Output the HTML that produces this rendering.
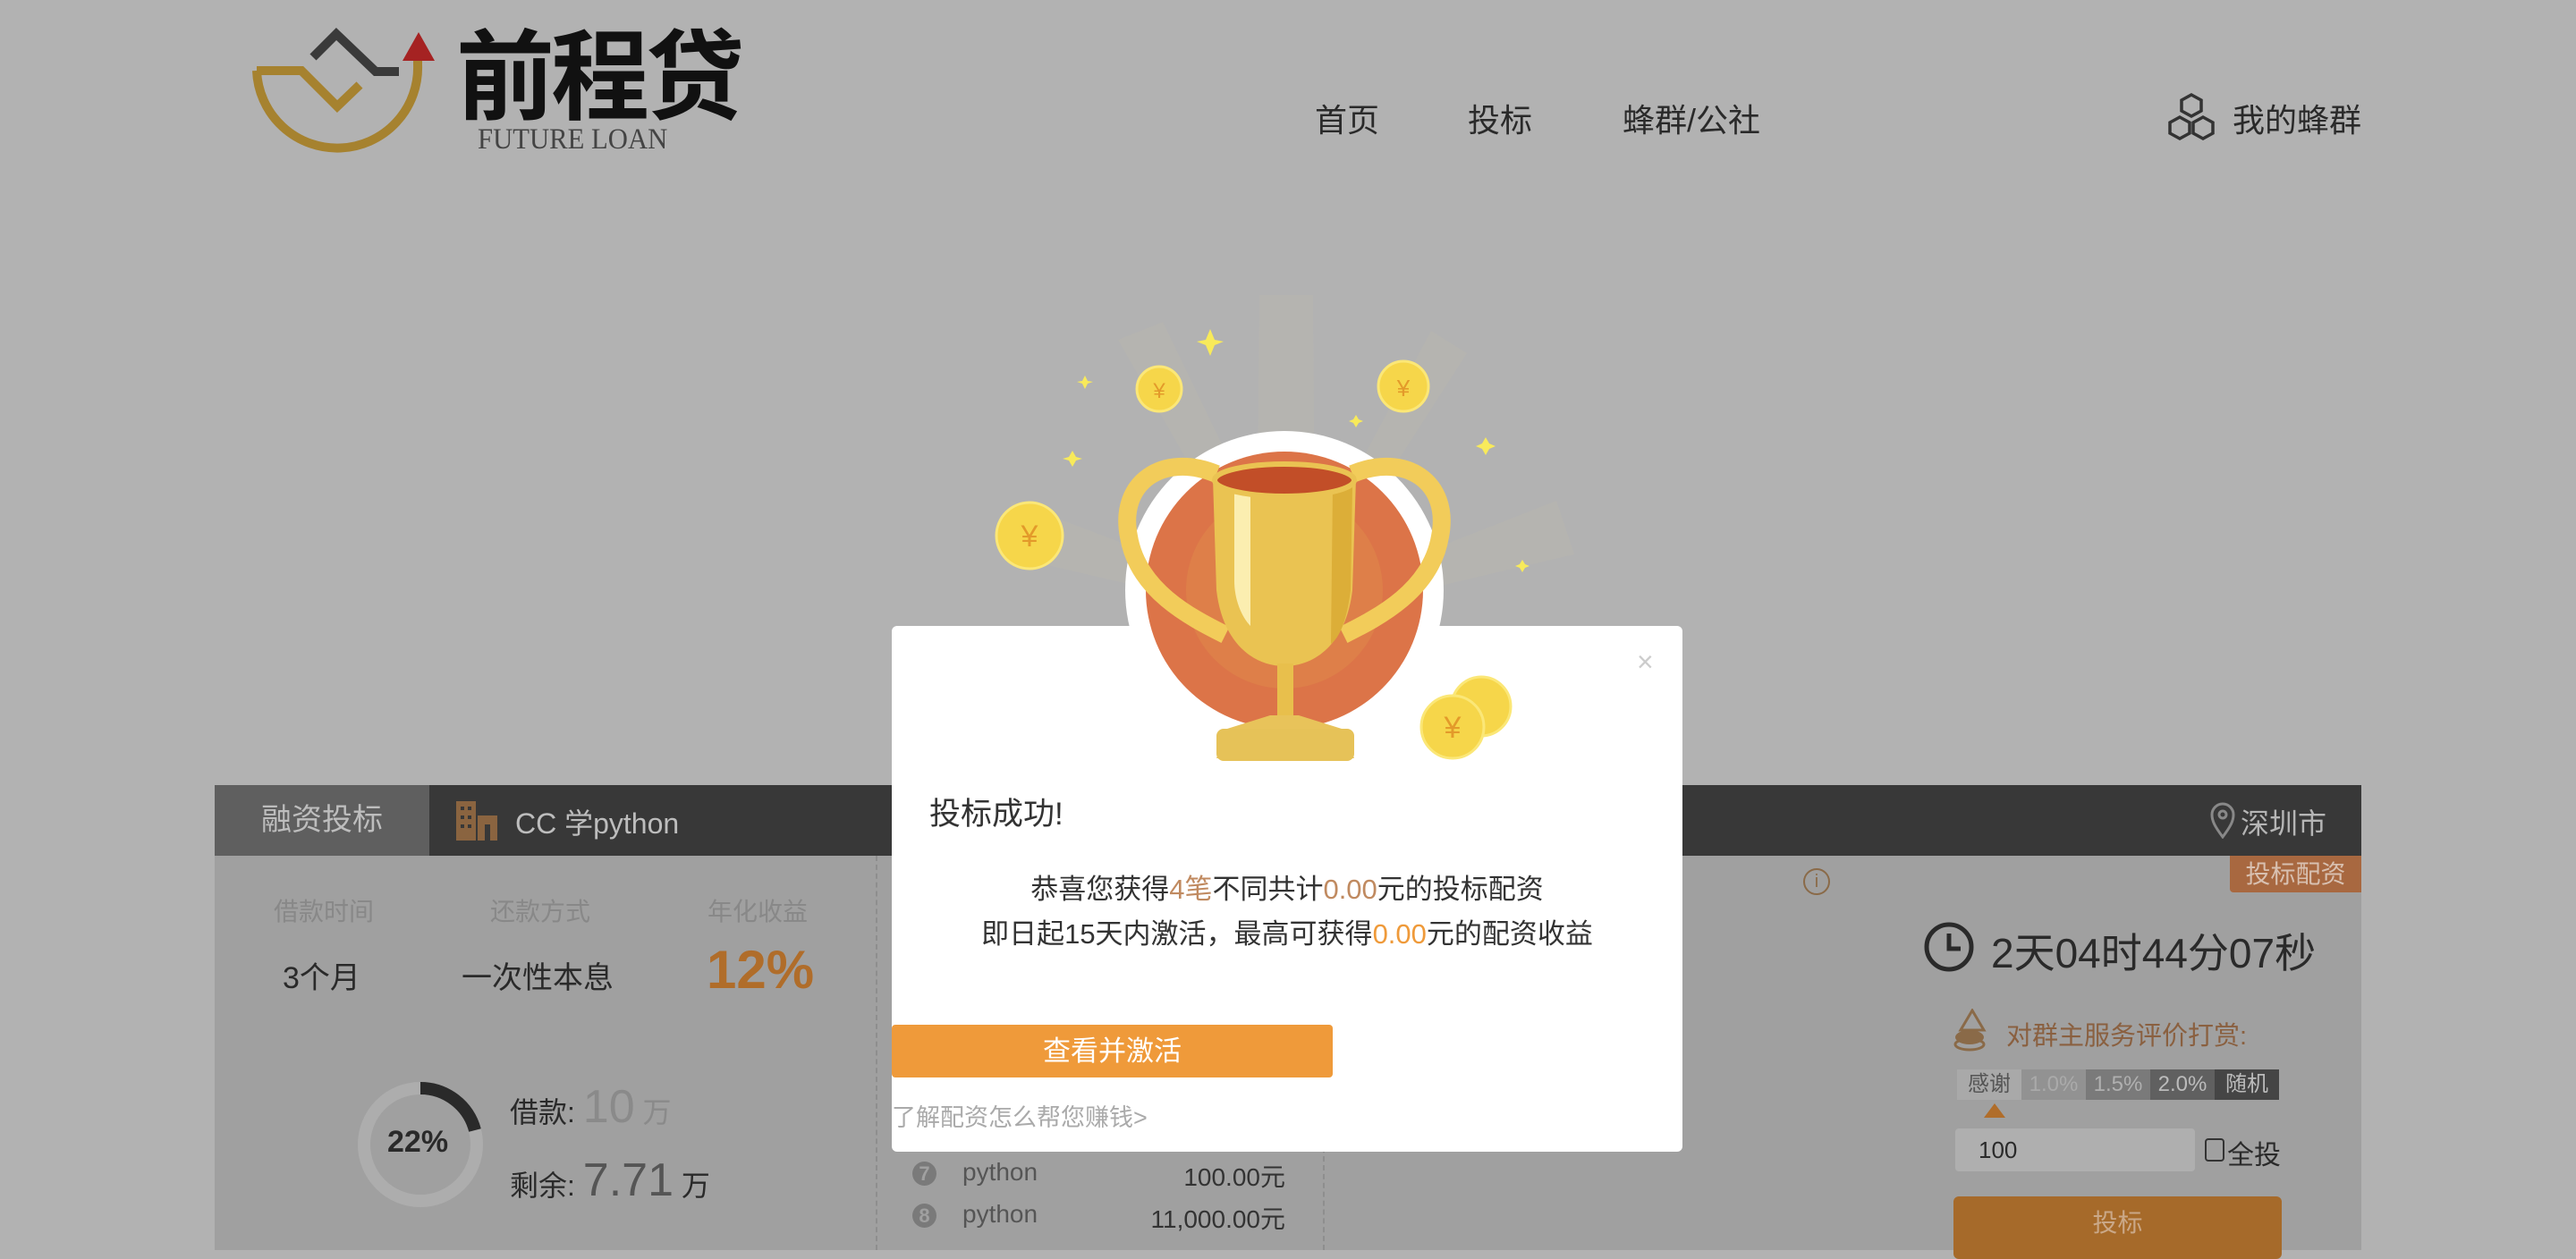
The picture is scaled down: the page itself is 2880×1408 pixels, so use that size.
<!DOCTYPE html>
<html><head><meta charset="utf-8">
<style>
*{margin:0;padding:0;box-sizing:border-box}
body{width:2880px;height:1398px;overflow:hidden;background:#b2b2b2;font-family:"Liberation Sans","Noto Sans CJK SC",sans-serif;position:relative;color:#2a2a2a}
.a{position:absolute;white-space:nowrap}
</style></head><body>
<!-- logo -->
<svg class="a" style="left:260px;top:22px" width="240" height="170" viewBox="260 10 240 170">
<path d="M287 67 L337 67 L377 107 L402 83" fill="none" stroke="#a6822f" stroke-width="10"/>
<path d="M287 67 A90 90 0 0 0 467 60 L467 50" fill="none" stroke="#a6822f" stroke-width="10"/>
<path d="M350 52 L376 26 L420 68 L446 68" fill="none" stroke="#3a3a3a" stroke-width="10"/>
<path d="M450 56 L468 24 L486 56 Z" fill="#a52222"/>
</svg>
<div class="a" style="left:510px;top:28px;font-size:110px;line-height:120px;color:#111;letter-spacing:-4px;font-weight:bold">前程贷</div>
<div class="a" style="left:534px;top:138px;font-size:33px;font-family:'Liberation Serif',serif;color:#444;transform:scaleX(.93);transform-origin:left">FUTURE LOAN</div>
<!-- nav -->
<div class="a" style="left:1470px;top:106px;font-size:36px;color:#2a2a2a">首页</div>
<div class="a" style="left:1641px;top:106px;font-size:36px;color:#2a2a2a">投标</div>
<div class="a" style="left:1814px;top:106px;font-size:36px;color:#2a2a2a">蜂群/公社</div>
<svg class="a" style="left:2420px;top:102px" width="60" height="60" viewBox="0 0 60 60">
<g fill="none" stroke="#333" stroke-width="3.5">
<path d="M30 4 L41 10 L41 22 L30 28 L19 22 L19 10 Z"/>
<path d="M17 29 L28 35 L28 47 L17 53 L6 47 L6 35 Z"/>
<path d="M43 29 L54 35 L54 47 L43 53 L32 47 L32 35 Z"/>
</g></svg>
<div class="a" style="left:2496px;top:106px;font-size:36px;color:#2a2a2a">我的蜂群</div>

<!-- main panel -->
<div class="a" style="left:240px;top:878px;width:2400px;height:79px;background:#383838"></div>
<div class="a" style="left:240px;top:878px;width:240px;height:79px;background:#5f5f5f;color:#bdbdbd;font-size:34px;line-height:79px;text-align:center">融资投标</div>
<svg class="a" style="left:510px;top:896px" width="48" height="44" viewBox="0 0 48 44"><rect x="0" y="0" width="22" height="44" fill="#8a6440"/><rect x="24" y="16" width="22" height="28" fill="#8a6440"/><g fill="#383838"><rect x="5" y="6" width="4" height="4"/><rect x="13" y="6" width="4" height="4"/><rect x="5" y="16" width="4" height="4"/><rect x="13" y="16" width="4" height="4"/><rect x="5" y="26" width="4" height="4"/><rect x="13" y="26" width="4" height="4"/><rect x="32" y="26" width="6" height="18"/></g></svg>
<div class="a" style="left:576px;top:896px;font-size:32px;color:#bdbdbd">CC 学python</div>
<svg class="a" style="left:2470px;top:896px" width="30" height="42" viewBox="0 0 30 42"><path d="M15 40 C6 28 3 22 3 15 A12 12 0 0 1 27 15 C27 22 24 28 15 40 Z" fill="none" stroke="#888" stroke-width="3"/><circle cx="15" cy="15" r="4" fill="none" stroke="#888" stroke-width="3"/></svg>
<div class="a" style="left:2505px;top:896px;font-size:32px;color:#b5b5b5">深圳市</div>

<div class="a" style="left:240px;top:957px;width:2400px;height:441px;background:#a0a0a0"></div>
<div class="a" style="left:979px;top:957px;height:441px;border-left:2px dashed #8e8e8e"></div>
<div class="a" style="left:1479px;top:957px;height:441px;border-left:2px dashed #8e8e8e"></div>

<div class="a" style="left:306px;top:998px;font-size:28px;color:#888">借款时间</div>
<div class="a" style="left:548px;top:998px;font-size:28px;color:#888">还款方式</div>
<div class="a" style="left:791px;top:998px;font-size:28px;color:#888">年化收益</div>
<div class="a" style="left:316px;top:1066px;font-size:34px;color:#2a2a2a">3个月</div>
<div class="a" style="left:516px;top:1066px;font-size:34px;color:#2a2a2a">一次性本息</div>
<div class="a" style="left:790px;top:1050px;font-size:60px;font-weight:bold;color:#b06d2a">12%</div>

<svg class="a" style="left:396px;top:1206px" width="148" height="148" viewBox="0 0 148 148">
<circle cx="74" cy="74" r="63" fill="none" stroke="#adadad" stroke-width="14"/>
<path d="M74 11 A63 63 0 0 1 135 58" fill="none" stroke="#2a2a2a" stroke-width="14"/>
</svg>
<div class="a" style="left:433px;top:1258px;font-size:34px;font-weight:bold;color:#2a2a2a">22%</div>
<div class="a" style="left:570px;top:1208px;font-size:32px;color:#2a2a2a">借款: <span style="font-size:52px;color:#8a8a8a">10</span> <span style="color:#8a8a8a">万</span></div>
<div class="a" style="left:570px;top:1290px;font-size:32px;color:#2a2a2a">剩余: <span style="font-size:52px;color:#555">7.71</span> 万</div>

<div class="a" style="left:1020px;top:1299px;width:27px;height:27px;border-radius:50%;background:#7a7a7a;color:#a0a0a0;font-size:22px;line-height:27px;text-align:center;font-weight:bold">7</div>
<div class="a" style="left:1076px;top:1295px;font-size:28px;color:#555">python</div>
<div class="a" style="left:1237px;top:1295px;width:200px;text-align:right;font-size:28px;color:#333">100.00元</div>
<div class="a" style="left:1020px;top:1346px;width:27px;height:27px;border-radius:50%;background:#7a7a7a;color:#a0a0a0;font-size:22px;line-height:27px;text-align:center;font-weight:bold">8</div>
<div class="a" style="left:1076px;top:1342px;font-size:28px;color:#555">python</div>
<div class="a" style="left:1237px;top:1342px;width:200px;text-align:right;font-size:28px;color:#333">11,000.00元</div>

<div class="a" style="left:2016px;top:971px;width:30px;height:30px;border:2px solid #8a6a48;border-radius:50%;color:#8a6a48;font-size:20px;line-height:26px;text-align:center">i</div>

<div class="a" style="left:2493px;top:957px;width:147px;height:41px;background:#a86840;color:#d8c0b0;font-size:28px;line-height:41px;text-align:center;border-radius:0 0 0 4px">投标配资</div>
<svg class="a" style="left:2150px;top:1030px" width="58" height="58" viewBox="0 0 58 58"><circle cx="29" cy="29" r="25" fill="none" stroke="#2a2a2a" stroke-width="5"/><path d="M29 14 L29 31 L42 31" fill="none" stroke="#2a2a2a" stroke-width="5"/></svg>
<div class="a" style="left:2226px;top:1030px;font-size:46px;color:#2a2a2a">2天04时44分07秒</div>
<svg class="a" style="left:2182px;top:1128px" width="46" height="48" viewBox="0 0 46 48"><path d="M23 2 L36 24 L10 24 Z" fill="none" stroke="#8a6a48" stroke-width="3"/><ellipse cx="20" cy="32" rx="16" ry="8" fill="#8a6a48"/><ellipse cx="20" cy="40" rx="16" ry="6" fill="none" stroke="#8a6a48" stroke-width="3"/></svg>
<div class="a" style="left:2243px;top:1135px;font-size:29px;color:#8a6040">对群主服务评价打赏:</div>
<div class="a" style="left:2188px;top:1196px;width:72px;height:34px;background:#a9a9a9;color:#555;font-size:24px;line-height:34px;text-align:center">感谢</div>
<div class="a" style="left:2260px;top:1196px;width:72px;height:34px;background:#929292;color:#aaa;font-size:24px;line-height:34px;text-align:center">1.0%</div>
<div class="a" style="left:2332px;top:1196px;width:72px;height:34px;background:#7a7a7a;color:#b0b0b0;font-size:24px;line-height:34px;text-align:center">1.5%</div>
<div class="a" style="left:2404px;top:1196px;width:72px;height:34px;background:#606060;color:#bbb;font-size:24px;line-height:34px;text-align:center">2.0%</div>
<div class="a" style="left:2476px;top:1196px;width:72px;height:34px;background:#454545;color:#bbb;font-size:24px;line-height:34px;text-align:center">随机</div>
<div class="a" style="left:2218px;top:1234px;width:0;height:0;border-left:12px solid transparent;border-right:12px solid transparent;border-bottom:16px solid #b06d2a"></div>
<div class="a" style="left:2186px;top:1262px;width:268px;height:48px;background:#afafaf;border-radius:4px;font-size:26px;line-height:48px;padding-left:26px;color:#2a2a2a">100</div>
<div class="a" style="left:2465px;top:1273px;width:22px;height:26px;border:2px solid #333;border-radius:4px"></div>
<div class="a" style="left:2490px;top:1267px;font-size:30px;color:#2a2a2a">全投</div>
<div class="a" style="left:2184px;top:1338px;width:367px;height:70px;background:#a66a2a;border-radius:6px;color:#caa888;font-size:28px;line-height:60px;text-align:center">投标</div>

<!-- modal -->
<div class="a" style="left:997px;top:700px;width:884px;height:588px;background:#fff;border-radius:6px"></div>
<div class="a" style="left:1830px;top:722px;font-size:32px;color:#ccc">×</div>
<div class="a" style="left:1039px;top:882px;font-size:35px;color:#333">投标成功!</div>
<div class="a" style="left:997px;top:970px;width:884px;text-align:center;font-size:31px;color:#333;line-height:50px">恭喜您获得<span style="color:#c08a60">4笔</span>不同共计<span style="color:#c08a60">0.00</span>元的投标配资<br>即日起15天内激活，最高可获得<span style="color:#ef9a3a">0.00</span>元的配资收益</div>
<div class="a" style="left:997px;top:1146px;width:493px;height:59px;background:#ef9a3a;border-radius:4px;color:#fff;font-size:31px;line-height:59px;text-align:center">查看并激活</div>
<div class="a" style="left:997px;top:1228px;font-size:27px;color:#aaa">了解配资怎么帮您赚钱&gt;</div>

<!-- trophy -->
<svg class="a" style="left:1080px;top:330px" width="720" height="540" viewBox="1080 330 720 540">
<g fill="#c9c3a8" opacity=".16">
<path d="M1405 660 L1408 330 L1468 330 L1470 660 Z"/>
<path d="M1410 660 L1250 380 L1300 360 L1440 650 Z"/>
<path d="M1450 650 L1600 370 L1640 395 L1470 660 Z"/>
<path d="M1420 670 L1130 560 L1120 620 L1420 690 Z"/>
<path d="M1460 670 L1740 560 L1760 620 L1460 690 Z"/>
</g>
<circle cx="1436" cy="660" r="178" fill="#fff"/>
<circle cx="1436" cy="660" r="155" fill="#dc7448"/>
<circle cx="1436" cy="660" r="110" fill="#df8a4a" opacity=".5"/>
<path d="M1360 530 C1300 505 1250 540 1262 600 C1272 660 1330 690 1370 710" fill="none" stroke="#f2cc5a" stroke-width="20"/>
<path d="M1512 530 C1572 505 1622 540 1610 600 C1600 660 1542 690 1502 710" fill="none" stroke="#f2cc5a" stroke-width="20"/>
<path d="M1356 535 L1516 535 L1512 660 C1505 720 1470 745 1436 745 C1402 745 1367 720 1360 660 Z" fill="#eac352"/>
<path d="M1380 550 L1398 550 L1398 700 C1388 690 1380 670 1380 650 Z" fill="#fbeeb0"/>
<path d="M1490 545 L1512 545 L1510 660 C1505 700 1495 715 1488 720 Z" fill="#dcae38"/>
<ellipse cx="1436" cy="537" rx="78" ry="18" fill="#c24e28" stroke="#eac352" stroke-width="6"/>
<rect x="1428" y="742" width="18" height="66" fill="#e8bf4c"/>
<path d="M1420 800 L1452 800 L1500 815 L1514 848 L1360 848 L1372 815 Z" fill="#e8c35a"/>
<rect x="1360" y="815" width="154" height="36" rx="8" fill="#e6c258"/>
<g fill="#f6d64a" stroke="#fbe777" stroke-width="3">
<circle cx="1151" cy="599" r="37"/><circle cx="1296" cy="435" r="25"/><circle cx="1569" cy="432" r="28"/>
<circle cx="1656" cy="790" r="33"/><circle cx="1624" cy="813" r="35"/>
</g>
<g font-size="34" fill="#e39a2a" text-anchor="middle" font-family="Liberation Sans,sans-serif"><text x="1151" y="611">¥</text><text x="1296" y="445" font-size="24">¥</text><text x="1569" y="443" font-size="26">¥</text><text x="1624" y="825">¥</text></g>
<g fill="#f8ea5a">
<path d="M1353 368 L1358 380 L1368 382 L1358 386 L1353 398 L1348 386 L1338 382 L1348 380 Z"/>
<path d="M1213 420 L1216 426 L1222 427 L1216 429 L1213 435 L1210 429 L1204 427 L1210 426 Z"/>
<path d="M1199 504 L1203 511 L1210 513 L1203 515 L1199 522 L1195 515 L1188 513 L1195 511 Z"/>
<path d="M1516 464 L1519 469 L1524 471 L1519 473 L1516 478 L1513 473 L1508 471 L1513 469 Z"/>
<path d="M1661 489 L1665 496 L1672 499 L1665 502 L1661 509 L1657 502 L1650 499 L1657 496 Z"/>
<path d="M1702 626 L1705 631 L1710 633 L1705 635 L1702 640 L1699 635 L1694 633 L1699 631 Z"/>
</g>
</svg>
</body></html>
